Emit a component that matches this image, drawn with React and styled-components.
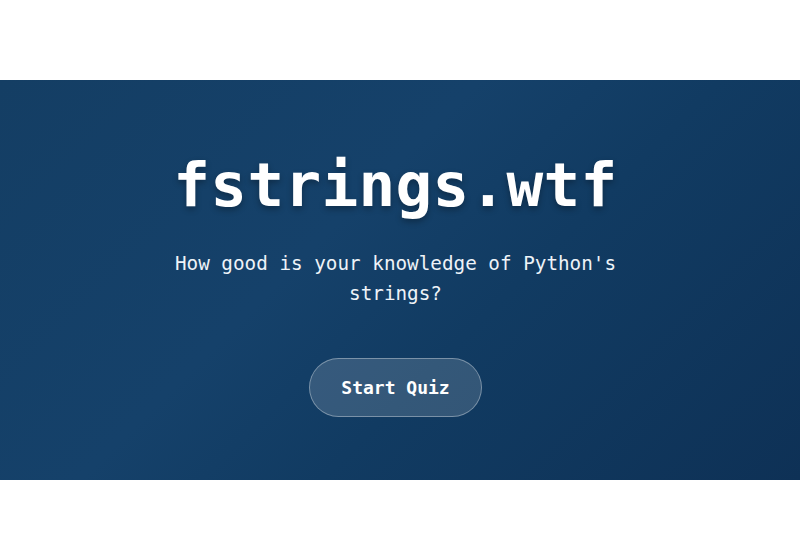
import React from "react";
import styled, { createGlobalStyle } from "styled-components";

const GlobalStyle = createGlobalStyle`
  html, body {
    margin: 0;
    padding: 0;
    background: #ffffff;
  }
  body {
    font-family: "DejaVu Sans Mono", "Liberation Mono", monospace;
  }
`;

const Page = styled.div`
  width: 800px;
  height: 560px;
  padding-top: 80px;
  box-sizing: border-box;
`;

const Hero = styled.section`
  height: 400px;
  box-sizing: border-box;
  padding: 5px 9px 0 0;
  display: flex;
  flex-direction: column;
  align-items: center;
  justify-content: center;
  text-align: center;
  color: #ffffff;
  background: linear-gradient(
    135deg,
    #143e64 0%,
    #15416a 40%,
    #113b62 60%,
    #0e3156 100%
  );
`;

const Title = styled.h1`
  margin: 0 0 28px;
  font-size: 61px;
  line-height: 72px;
  font-weight: 700;
  letter-spacing: 0.3px;
  text-shadow: 0 3px 6px rgba(0, 0, 0, 0.3);
`;

const Tagline = styled.p`
  margin: 0 0 49px;
  max-width: 480px;
  font-size: 19.3px;
  line-height: 30px;
  color: #eef3f8;
`;

const StartButton = styled.button`
  height: 59px;
  padding: 0 31px;
  border-radius: 30px;
  border: 1px solid rgba(255, 255, 255, 0.35);
  background: rgba(255, 255, 255, 0.15);
  color: #ffffff;
  font-family: inherit;
  font-size: 18px;
  font-weight: 700;
  cursor: pointer;
`;

export default function App() {
  return (
    <Page>
      <GlobalStyle />
      <Hero>
        <Title>fstrings.wtf</Title>
        <Tagline>How good is your knowledge of Python's strings?</Tagline>
        <StartButton>Start Quiz</StartButton>
      </Hero>
    </Page>
  );
}
